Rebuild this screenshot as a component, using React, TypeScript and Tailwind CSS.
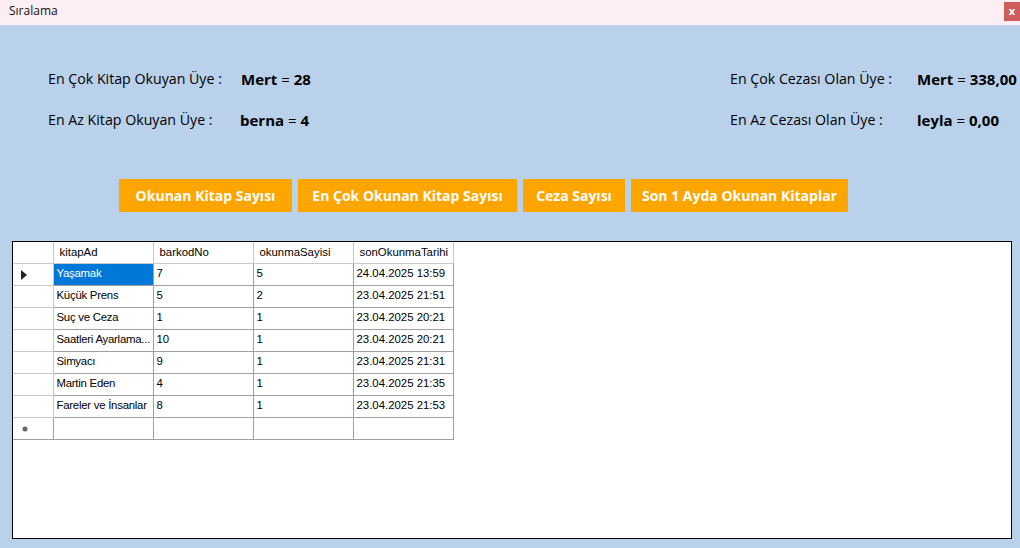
import React from "react";

const rows = [
  { kitapAd: "Yaşamak", barkodNo: "7", okunmaSayisi: "5", tarih: "24.04.2025 13:59" },
  { kitapAd: "Küçük Prens", barkodNo: "5", okunmaSayisi: "2", tarih: "23.04.2025 21:51" },
  { kitapAd: "Suç ve Ceza", barkodNo: "1", okunmaSayisi: "1", tarih: "23.04.2025 20:21" },
  { kitapAd: "Saatleri Ayarlama...", barkodNo: "10", okunmaSayisi: "1", tarih: "23.04.2025 20:21" },
  { kitapAd: "Simyacı", barkodNo: "9", okunmaSayisi: "1", tarih: "23.04.2025 21:31" },
  { kitapAd: "Martin Eden", barkodNo: "4", okunmaSayisi: "1", tarih: "23.04.2025 21:35" },
  { kitapAd: "Fareler ve İnsanlar", barkodNo: "8", okunmaSayisi: "1", tarih: "23.04.2025 21:53" },
];

const headers = ["kitapAd", "barkodNo", "okunmaSayisi", "sonOkunmaTarihi"];
const buttons = ["Okunan Kitap Sayısı", "En Çok Okunan Kitap Sayısı", "Ceza Sayısı", "Son 1 Ayda Okunan Kitaplar"];
const buttonW = ["w-[173px]", "w-[219px]", "w-[102px]", "w-[217px]"];

const Stat: React.FC<{ label: string; name: string; value: string; labelW: string }> = ({
  label,
  name,
  value,
  labelW,
}) => (
  <div className="flex items-center h-[22px] text-black whitespace-nowrap">
    <span className={`${labelW} text-[14.2px]`}>{label}</span>
    <span className="text-[15px]">
      <b>{name}</b> = <b>{value}</b>
    </span>
  </div>
);

const cell = "border-r border-b border-[#A0A0A0] pl-[3px] overflow-hidden whitespace-nowrap";

export default function App() {
  return (
    <div
      className="w-[1020px] h-[548px] bg-[#B9D1EA] flex flex-col overflow-hidden"
      style={{ fontFamily: '"Open Sans", "Noto Sans", sans-serif' }}
    >
      <div className="h-[25px] bg-[#FCEEF3] flex items-start justify-between shrink-0">
        <span className="pl-[9px] pt-[3px] text-[12px] leading-[16px] text-[#111]">Sıralama</span>
        <div className="mt-[2px] w-[16px] h-[19px] bg-[#CD5C5C] flex items-center justify-center text-white text-[11px] font-bold leading-none pb-[2px]">
          x
        </div>
      </div>

      <div className="flex justify-between pt-[43px] h-[154px] shrink-0">
        <div className="pl-[48px] flex flex-col gap-[19px]">
          <Stat label="En Çok Kitap Okuyan Üye :" name="Mert" value="28" labelW="w-[193px]" />
          <Stat label="En Az Kitap Okuyan Üye :" name="berna" value="4" labelW="w-[192px]" />
        </div>
        <div className="w-[290px] flex flex-col gap-[19px]">
          <Stat label="En Çok Cezası Olan Üye :" name="Mert" value="338,00" labelW="w-[187px]" />
          <Stat label="En Az Cezası Olan Üye :" name="leyla" value="0,00" labelW="w-[187px]" />
        </div>
      </div>

      <div className="flex gap-[6px] pl-[119px] h-[33px] shrink-0">
        {buttons.map((b, i) => (
          <div
            key={b}
            className={`bg-[#FFA500] text-white font-bold text-[14px] flex items-center justify-center ${buttonW[i]}`}
          >
            {b}
          </div>
        ))}
      </div>

      <div className="mt-[29px] ml-[12px] w-[1000px] h-[298px] border border-black bg-white overflow-hidden">
        <table
          className="table-fixed w-[440px] border-collapse text-[11.4px] text-black"
          style={{ fontFamily: '"Liberation Sans", Arial, sans-serif' }}
        >
          <colgroup>
            <col className="w-[40px]" />
            <col className="w-[100px]" />
            <col className="w-[100px]" />
            <col className="w-[100px]" />
            <col className="w-[100px]" />
          </colgroup>
          <thead>
            <tr className="h-[21px]">
              <th className="border-r border-b border-[#C8C8C8]"></th>
              {headers.map((h) => (
                <th
                  key={h}
                  className="border-r border-b border-[#C8C8C8] font-normal text-left pl-[6px] whitespace-nowrap overflow-hidden"
                >
                  {h}
                </th>
              ))}
            </tr>
          </thead>
          <tbody>
            {rows.map((r, i) => (
              <tr key={r.kitapAd} className="h-[22px]">
                <td className="border-r border-b border-[#C8C8C8] pl-[8px] pt-[2px]">
                  {i === 0 && (
                    <svg width="6" height="10" viewBox="0 0 6 10">
                      <path d="M0 0 L6 5 L0 10 Z" fill="#222" />
                    </svg>
                  )}
                </td>
                <td
                  className={`${cell} tracking-[-0.25px] ${i === 0 ? "bg-[#0078D7] text-white" : ""}`}
                >
                  {r.kitapAd}
                </td>
                <td className={cell}>{r.barkodNo}</td>
                <td className={cell}>{r.okunmaSayisi}</td>
                <td className={cell}>{r.tarih}</td>
              </tr>
            ))}
            <tr className="h-[22px]">
              <td className="border-r border-b border-[#A0A0A0] pl-[9px] pt-[2px]">
                <svg width="6" height="6" viewBox="0 0 6 6">
                  <circle cx="3" cy="3" r="2.5" fill="#666" />
                </svg>
              </td>
              <td className={cell}></td>
              <td className={cell}></td>
              <td className={cell}></td>
              <td className={cell}></td>
            </tr>
          </tbody>
        </table>
      </div>
    </div>
  );
}
